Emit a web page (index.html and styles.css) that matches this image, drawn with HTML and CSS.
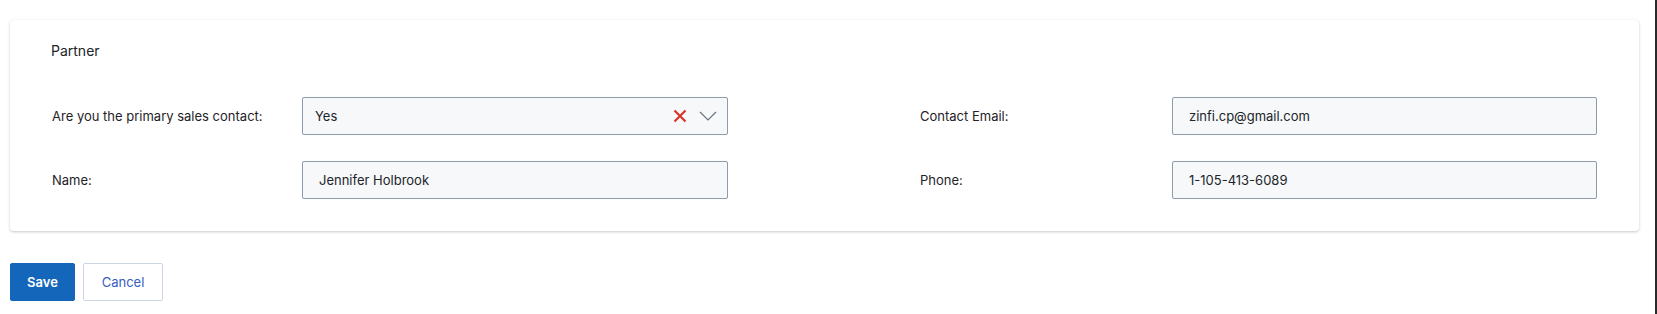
FILE: index.html
```html
<!DOCTYPE html>
<html lang="en">
<head>
    <meta charset="UTF-8">
    <meta name="viewport" content="width=device-width, initial-scale=1.0">
    <title>Partner</title>
    <link rel="stylesheet" href="styles.css">
</head>
<body>

    <div class="page">
        <div class="content">

            <div class="card">
                <div class="card-title">Partner</div>

                <div class="form-grid">
                    <label class="field-label">Are you the primary sales contact:</label>
                    <div class="select-box">
                        <span class="select-value">Yes</span>
                        <span class="select-clear">
                            <svg width="14" height="14" viewBox="0 0 14 14"><path d="M1.5 1.5 L12.5 12.5 M12.5 1.5 L1.5 12.5" stroke="#d9342b" stroke-width="2.2" fill="none"/></svg>
                        </span>
                        <span class="select-arrow">
                            <svg width="18" height="10" viewBox="0 0 18 10"><path d="M1 1 L9 9 L17 1" stroke="#6b7280" stroke-width="1.2" fill="none"/></svg>
                        </span>
                    </div>
                    <span class="spacer"></span>
                    <label class="field-label">Contact Email:</label>
                    <input type="text" class="input-field" value="zinfi.cp@gmail.com">

                    <label class="field-label">Name:</label>
                    <input type="text" class="input-field" value="Jennifer Holbrook">
                    <span class="spacer"></span>
                    <label class="field-label">Phone:</label>
                    <input type="text" class="input-field" value="1-105-413-6089">
                </div>
            </div>

            <div class="actions">
                <button class="btn btn-primary">Save</button>
                <button class="btn btn-outline">Cancel</button>
            </div>

        </div>
        <div class="edge"></div>
    </div>

</body>
</html>
```

FILE: styles.css
```css
html, body {
    margin: 0;
    padding: 0;
    background-color: #ffffff;
    font-family: "Inter", "Noto Sans", sans-serif;
    color: #212529;
}

.page {
    display: flex;
    min-height: 100vh;
}

.content {
    flex: 1;
    padding: 20px 16px 0 10px;
}

.edge {
    width: 2px;
    background-color: #2a2a2a;
    flex-shrink: 0;
}

.card {
    background-color: #ffffff;
    border-radius: 4px;
    box-shadow: 0 1px 3px rgba(0, 0, 0, 0.22);
    padding: 21px 0 32px 0;
}

.card-title {
    font-size: 14px;
    line-height: 20px;
    padding-left: 41px;
    margin-bottom: 36px;
}

.form-grid {
    display: grid;
    grid-template-columns: 250px 426px 192px 252px 425px;
    row-gap: 26px;
    align-items: center;
    padding-left: 42px;
}

.field-label {
    font-size: 13px;
    color: #1f2329;
}

.input-field {
    height: 38px;
    box-sizing: border-box;
    padding: 0 16px;
    font-family: inherit;
    font-size: 13px;
    color: #212529;
    background-color: #f6f8fa;
    border: 1px solid #8e9bab;
    border-radius: 2px;
    outline: none;
}

.select-box {
    height: 38px;
    box-sizing: border-box;
    display: flex;
    align-items: center;
    padding: 0 10px 0 12px;
    background-color: #f6f8fa;
    border: 1px solid #8e9bab;
    border-radius: 2px;
    font-size: 13px;
}

.select-value {
    flex-grow: 1;
}

.select-clear {
    display: flex;
    margin-right: 12px;
}

.select-arrow {
    display: flex;
}

.actions {
    display: flex;
    gap: 8px;
    margin-top: 32px;
}

.btn {
    height: 38px;
    box-sizing: border-box;
    font-family: inherit;
    font-size: 13px;
    border-radius: 2px;
    cursor: pointer;
}

.btn-primary {
    width: 65px;
    background-color: #1366b9;
    color: #ffffff;
    font-weight: 600;
    border: 1px solid #1366b9;
}

.btn-outline {
    width: 80px;
    background-color: #ffffff;
    color: #3560c4;
    border: 1px solid #cdd6e3;
}
```
